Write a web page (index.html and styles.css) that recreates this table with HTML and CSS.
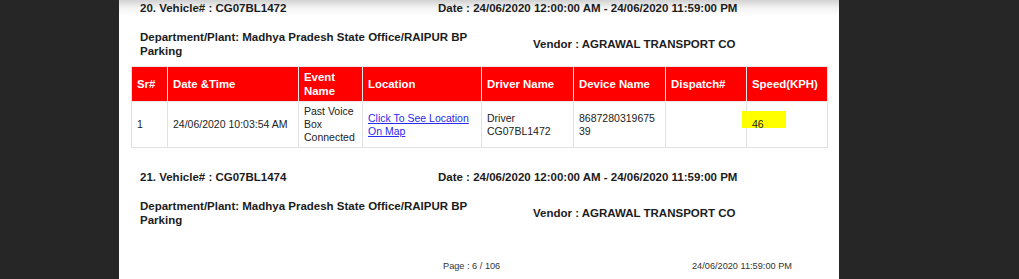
FILE: index.html
```html
<!DOCTYPE html>
<html>
<head>
<meta charset="utf-8">
<link rel="stylesheet" href="styles.css">
</head>
<body>
<div class="viewer">
  <div class="page">
    <div class="info-row title-row">
      <div class="title-left">20. Vehicle# : CG07BL1472</div>
      <div>Date : 24/06/2020 12:00:00 AM - 24/06/2020 11:59:00 PM</div>
    </div>
    <div class="info-row dept-row">
      <div class="dept">Department/Plant: Madhya Pradesh State Office/RAIPUR BP Parking</div>
      <div class="vendor">Vendor : AGRAWAL TRANSPORT CO</div>
    </div>
    <table class="report">
      <colgroup>
        <col class="c1"><col class="c2"><col class="c3"><col class="c4"><col class="c5"><col class="c6"><col class="c7"><col class="c8">
      </colgroup>
      <thead>
        <tr>
          <th>Sr#</th>
          <th>Date &amp;Time</th>
          <th>Event Name</th>
          <th>Location</th>
          <th>Driver Name</th>
          <th>Device Name</th>
          <th>Dispatch#</th>
          <th>Speed(KPH)</th>
        </tr>
      </thead>
      <tbody>
        <tr>
          <td>1</td>
          <td>24/06/2020 10:03:54 AM</td>
          <td>Past Voice Box Connected</td>
          <td><a href="#" class="map-link">Click To See Location On Map</a></td>
          <td>Driver CG07BL1472</td>
          <td class="device">868728031967539</td>
          <td></td>
          <td class="speed"><span class="hl">46</span></td>
        </tr>
      </tbody>
    </table>
    <div class="info-row title-row second">
      <div class="title-left">21. Vehicle# : CG07BL1474</div>
      <div>Date : 24/06/2020 12:00:00 AM - 24/06/2020 11:59:00 PM</div>
    </div>
    <div class="info-row dept-row">
      <div class="dept">Department/Plant: Madhya Pradesh State Office/RAIPUR BP Parking</div>
      <div class="vendor">Vendor : AGRAWAL TRANSPORT CO</div>
    </div>
    <div class="footer">
      <div class="footer-page">Page : 6 / 106</div>
      <div>24/06/2020 11:59:00 PM</div>
    </div>
  </div>
</div>
</body>
</html>
```
FILE: styles.css
```css
html, body {
  margin: 0;
  padding: 0;
  height: 100%;
  background: #262626;
  overflow: hidden;
}
.viewer {
  display: flex;
  padding-left: 119px;
  height: 279px;
}
.page {
  width: 720px;
  height: 279px;
  background: linear-gradient(#d2d2d2 0px, #f4f4f4 8px, #ffffff 16px);
  font-family: "Liberation Sans", Arial, sans-serif;
  color: #1c1c1c;
  padding-top: 1px;
  box-sizing: border-box;
  overflow: hidden;
}
.info-row {
  display: flex;
  align-items: center;
  padding-left: 21px;
  font-weight: bold;
  font-size: 11.5px;
  line-height: 14px;
}
.title-left {
  width: 298px;
}
.dept-row {
  margin-top: 15px;
}
.dept {
  width: 345px;
  margin-right: 48px;
}
.second {
  margin-top: 22px;
}
.report {
  margin-top: 8px;
  margin-left: 12px;
  width: 696px;
  table-layout: fixed;
  border-collapse: collapse;
}
.c1 { width: 36px; }
.c2 { width: 131px; }
.c3 { width: 64px; }
.c4 { width: 119px; }
.c5 { width: 92px; }
.c6 { width: 92px; }
.c7 { width: 81px; }
.c8 { width: 81px; }
.report th {
  background: #ff0000;
  color: #ffffff;
  font-weight: bold;
  font-size: 11.4px;
  line-height: 14px;
  text-align: left;
  vertical-align: middle;
  padding: 3px 5px;
  height: 26px;
  border: 1px solid #e8e8e8;
}
.report td {
  font-size: 10.5px;
  line-height: 13px;
  color: #222;
  vertical-align: middle;
  padding: 3px 5px;
  height: 38px;
  border: 1px solid #e2e2e2;
}
.report td.device {
  word-break: break-all;
  padding-right: 8px;
}
.report td.speed {
  padding-left: 5px;
}
.map-link {
  color: #2a2aee;
  text-decoration: underline;
}
.hl {
  display: inline-block;
  background: #ffff00;
  height: 17px;
  box-sizing: border-box;
  padding: 7px 22px 0 10px;
  margin: -7px 0 0 -10px;
}
.footer {
  display: flex;
  margin-top: 33px;
  padding-left: 324px;
  font-size: 9.2px;
  line-height: 12px;
  color: #333;
}
.footer-page {
  width: 249px;
}
```
